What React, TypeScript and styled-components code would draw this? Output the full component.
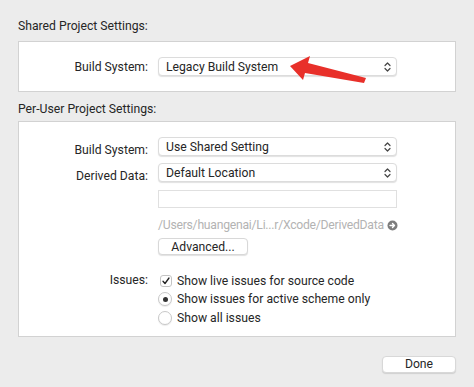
import React from "react";
import styled, { createGlobalStyle } from "styled-components";

const Global = createGlobalStyle`
  html, body {
    margin: 0;
    padding: 0;
    background: #ececec;
  }
  body {
    font-family: Roboto, "Liberation Sans", Arial, sans-serif;
    font-size: 12.2px;
    color: #262626;
  }
`;

const Window = styled.div`
  position: relative;
  width: 474px;
  height: 387px;
  box-sizing: border-box;
  padding: 18px 18px 0 18px;
  display: flex;
  flex-direction: column;
`;

const SectionTitle = styled.div<{ $mt?: number; $mb?: number }>`
  height: 16px;
  line-height: 16px;
  margin-top: ${(p) => p.$mt ?? 0}px;
  margin-bottom: ${(p) => p.$mb ?? 7}px;
`;

const Panel = styled.div<{ $pad: string }>`
  background: #fff;
  border: 1px solid #d2d2d2;
  padding: ${(p) => p.$pad};
  display: grid;
  grid-template-columns: 129px 239px;
  column-gap: 10px;
  align-items: center;
`;

const Label = styled.div`
  text-align: right;
  white-space: nowrap;
`;

const Select = styled.div<{ $mb?: number }>`
  height: 19px;
  box-sizing: border-box;
  background: #fff;
  border: 1px solid #dcdcdc;
  border-radius: 4px;
  box-shadow: 0 1px 1px rgba(0, 0, 0, 0.12);
  display: flex;
  align-items: center;
  justify-content: space-between;
  padding: 0 4px 0 7px;
  margin-bottom: ${(p) => p.$mb ?? 0}px;
`;

const TextField = styled.div`
  grid-column: 2;
  height: 18px;
  box-sizing: border-box;
  border: 1px solid #e0e0e0;
  background: #fff;
  margin-top: 1px;
`;

const PathRow = styled.div`
  grid-column: 2;
  display: flex;
  align-items: center;
  gap: 3px;
  color: #b3b3b3;
  height: 18px;
  margin-top: 8px;
  white-space: nowrap;
  letter-spacing: -0.25px;
  svg {
    flex-shrink: 0;
  }
`;

const PushButton = styled.div<{ $w: number }>`
  width: ${(p) => p.$w}px;
  height: 17px;
  box-sizing: border-box;
  background: #fff;
  border: 1px solid #d8d8d8;
  border-radius: 4px;
  box-shadow: 0 1px 1px rgba(0, 0, 0, 0.12);
  display: flex;
  align-items: center;
  justify-content: center;
`;

const AdvancedWrap = styled.div`
  grid-column: 2;
  margin-top: 4px;
  margin-bottom: 17px;
`;

const Options = styled.div`
  display: flex;
  flex-direction: column;
  gap: 1px;
`;

const Option = styled.div`
  display: flex;
  align-items: center;
  height: 17.5px;
  gap: 5px;
`;

const CheckBox = styled.div`
  width: 12px;
  height: 12px;
  box-sizing: border-box;
  margin-left: 2px;
  border: 1px solid #c4c4c4;
  border-radius: 3px;
  background: #fff;
  display: flex;
  align-items: center;
  justify-content: center;
`;

const Radio = styled.div<{ $on?: boolean }>`
  width: 14px;
  height: 14px;
  box-sizing: border-box;
  border: 1px solid #c8c8c8;
  border-radius: 50%;
  background: #fff;
  box-shadow: 0 1px 1px rgba(0, 0, 0, 0.08);
  display: flex;
  align-items: center;
  justify-content: center;
  &::after {
    content: "";
    display: ${(p) => (p.$on ? "block" : "none")};
    width: 5px;
    height: 5px;
    border-radius: 50%;
    background: #333;
  }
`;

const Footer = styled.div`
  display: flex;
  justify-content: flex-end;
  margin-top: 19px;
`;

const Arrow = styled.svg`
  position: absolute;
  left: 286px;
  top: 52px;
  pointer-events: none;
`;

const Stepper = () => (
  <svg width="9" height="12" viewBox="0 0 9 12">
    <path
      d="M2 4.5 L4.5 2 L7 4.5 M2 7.5 L4.5 10 L7 7.5"
      fill="none"
      stroke="#444"
      strokeWidth="1.2"
      strokeLinecap="round"
      strokeLinejoin="round"
    />
  </svg>
);

const GoIcon = () => (
  <svg width="11" height="11" viewBox="0 0 11 11">
    <circle cx="5.5" cy="5.5" r="5" fill="#7c7c7c" />
    <path
      d="M3 5.5 H7.5 M5.5 3.5 L7.5 5.5 L5.5 7.5"
      fill="none"
      stroke="#fff"
      strokeWidth="1.4"
      strokeLinecap="round"
      strokeLinejoin="round"
    />
  </svg>
);

const Check = () => (
  <svg width="10" height="10" viewBox="0 0 10 10">
    <path
      d="M2 5.2 L4 7.5 L8 2"
      fill="none"
      stroke="#222"
      strokeWidth="1.3"
      strokeLinecap="round"
      strokeLinejoin="round"
    />
  </svg>
);

const App: React.FC = () => {
  return (
    <>
      <Global />
      <Window>
        <SectionTitle>Shared Project Settings:</SectionTitle>
        <Panel $pad="15px 0 15px 0">
          <Label>Build System:</Label>
          <Select>
            <span>Legacy Build System</span>
            <Stepper />
          </Select>
        </Panel>

        <SectionTitle $mt={9} $mb={4}>
          Per-User Project Settings:
        </SectionTitle>
        <Panel $pad="15px 0 9px 0">
          <Label>Build System:</Label>
          <Select $mb={7}>
            <span>Use Shared Setting</span>
            <Stepper />
          </Select>
          <Label>Derived Data:</Label>
          <Select $mb={7}>
            <span>Default Location</span>
            <Stepper />
          </Select>
          <TextField />
          <PathRow>
            <span>/Users/huangenai/Li...r/Xcode/DerivedData</span>
            <GoIcon />
          </PathRow>
          <AdvancedWrap>
            <PushButton $w={90}>Advanced...</PushButton>
          </AdvancedWrap>
          <Label style={{ alignSelf: "start", lineHeight: "17.5px" }}>
            Issues:
          </Label>
          <Options>
            <Option>
              <CheckBox>
                <Check />
              </CheckBox>
              <span>Show live issues for source code</span>
            </Option>
            <Option>
              <Radio $on />
              <span>Show issues for active scheme only</span>
            </Option>
            <Option>
              <Radio />
              <span>Show all issues</span>
            </Option>
          </Options>
        </Panel>

        <Footer>
          <PushButton $w={74}>Done</PushButton>
        </Footer>

        <Arrow width="84" height="36" viewBox="0 0 84 36">
          <path
            d="M4 14 L24 4 L22 11 L80 26 L78 31 L19 21 L17 28 Z"
            fill="#e8302a"
          />
        </Arrow>
      </Window>
    </>
  );
};

export default App;
